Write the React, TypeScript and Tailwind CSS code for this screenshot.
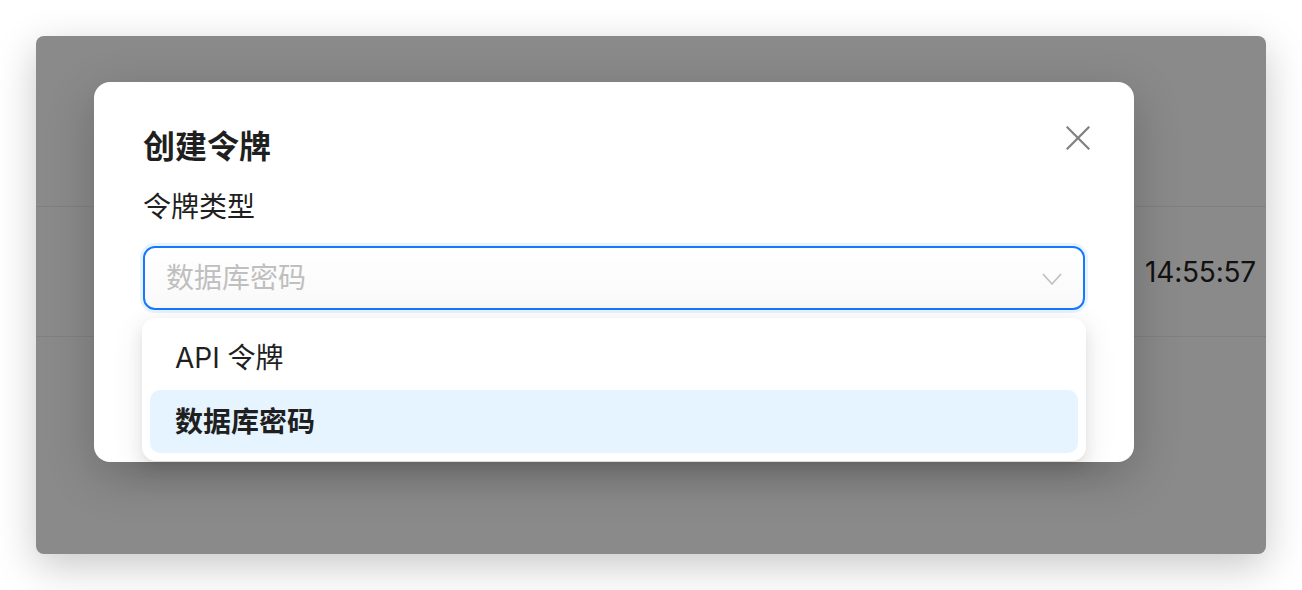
const font = 'font-["Inter","Noto_Sans_CJK_SC",sans-serif]'

export default function App() {
  return (
    <div className={`min-h-screen bg-white p-[36px] ${font}`}>
      <div className="relative w-[1230px] h-[518px] rounded-lg bg-[#8a8a8a] shadow-[0_12px_40px_rgba(0,0,0,0.22)] overflow-hidden">
        {/* page underneath the overlay */}
        <div className="flex flex-col">
          <div className="h-[171px] border-b border-[#808080]" />
          <div className="h-[130px] border-b border-[#808080] flex items-center justify-end pr-[10px]">
            <span className="text-[28px] text-[#111] tracking-[-0.2px]">14:55:57</span>
          </div>
        </div>

        {/* modal */}
        <div className="absolute left-[58px] top-[46px] w-[1040px] h-[380px] rounded-[16px] bg-white shadow-[0_14px_48px_rgba(0,0,0,0.22)] px-[49px] pt-[45px]">
          <div className="flex items-start justify-between">
            <h2 className="text-[32px] leading-[40px] font-bold text-[#1f1f1f]">创建令牌</h2>
            <button className="-mt-[1px] -mr-[5px]">
              <svg width="24" height="24" viewBox="0 0 24 24" fill="none" stroke="#808080" strokeWidth="2.2" strokeLinecap="square">
                <line x1="1.5" y1="1.5" x2="22.5" y2="22.5" />
                <line x1="22.5" y1="1.5" x2="1.5" y2="22.5" />
              </svg>
            </button>
          </div>
          <div className="mt-[22px] text-[28px] leading-[36px] text-[#1f1f1f]">令牌类型</div>
          <div className="mt-[21px] w-[942px] h-[64px] rounded-[12px] border-2 border-[#1677ff] bg-gradient-to-b from-white to-[#f9f9f9] shadow-[0_0_0_3px_rgba(5,145,255,0.1)] flex items-center justify-between pl-[21px] pr-[21px]">
            <span className="text-[28px] text-[#bfbfbf]">数据库密码</span>
            <svg width="20" height="12" viewBox="0 0 20 12" fill="none" stroke="#bfbfbf" strokeWidth="1.6" className="mt-[2px]">
              <polyline points="1,1 10,11 19,1" />
            </svg>
          </div>
        </div>

        {/* dropdown */}
        <div className="absolute left-[106px] top-[282px] w-[944px] rounded-[14px] bg-white p-[8px] shadow-[0_6px_16px_rgba(0,0,0,0.08),0_3px_6px_-4px_rgba(0,0,0,0.12),0_9px_28px_8px_rgba(0,0,0,0.05)]">
          <div className="h-[64px] flex items-center px-[25px] rounded-[10px] text-[28px] text-[#1f1f1f]">API 令牌</div>
          <div className="h-[63px] flex items-center px-[25px] rounded-[10px] bg-[#e6f4ff] text-[28px] font-bold text-[#1f1f1f]">数据库密码</div>
        </div>
      </div>
    </div>
  )
}
